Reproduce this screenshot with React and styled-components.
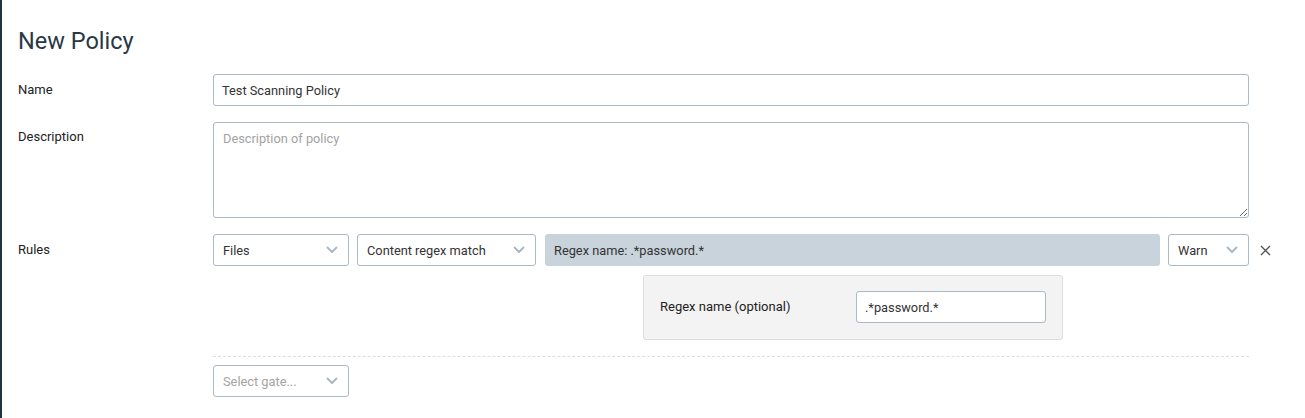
import styled, { createGlobalStyle } from 'styled-components';

const GlobalStyle = createGlobalStyle`
    html, body {
        margin: 0;
        padding: 0;
        background: #fff;
    }
    body {
        font-family: Roboto, "Noto Sans", "Liberation Sans", sans-serif;
        color: #333;
    }
    * {
        box-sizing: border-box;
    }
`;

const Pagina = styled.div`
    min-height: 100vh;
    border-left: 2px solid #23323f;
    padding: 26px 0 0 16px;
`;

const Titulo = styled.h1`
    margin: 0 0 18px;
    font-size: 23.5px;
    font-weight: 400;
    color: #2a3846;
    line-height: 30px;
`;

const Formulario = styled.div`
    display: grid;
    grid-template-columns: 195px 1036px 40px;
    row-gap: 16px;
`;

const Rotulo = styled.label`
    font-size: 13px;
    font-weight: 400;
    color: #222;
    padding-top: ${props => props.$topo || 8}px;
`;

const Campo = styled.input`
    width: 100%;
    height: 32px;
    border: 1px solid #a9b9c6;
    border-radius: 3px;
    padding: 0 8px;
    font: inherit;
    font-size: 12.8px;
    color: #333;
    outline: none;
`;

const AreaTexto = styled.textarea`
    width: 100%;
    height: 96px;
    border: 1px solid #a9b9c6;
    border-radius: 3px;
    padding: 8px 9px;
    font: inherit;
    font-size: 12.8px;
    color: #333;
    display: block;
    outline: none;

    &::placeholder {
        color: #a3a3a3;
    }
`;

const Vazio = styled.div``;

const Regras = styled.div`
    display: flex;
    flex-direction: column;
`;

const LinhaRegra = styled.div`
    display: flex;
    align-items: center;
    gap: 8px;
`;

const Seletor = styled.div`
    flex: 0 0 ${props => props.$largura}px;
    height: 32px;
    border: 1px solid #a9b9c6;
    border-radius: 3px;
    padding: 0 10px 0 9px;
    display: flex;
    align-items: center;
    justify-content: space-between;
    font-size: 12.8px;
    color: ${props => (props.$vazio ? '#a3a3a3' : '#333')};
    background: #fff;
`;

const Resumo = styled.div`
    flex: 1;
    height: 32px;
    margin-left: 1px;
    background: #c9d3dc;
    border-radius: 3px;
    padding: 0 9px;
    display: flex;
    align-items: center;
    font-size: 12.8px;
    color: #333;
`;

const Remover = styled.button`
    border: none;
    background: none;
    padding: 0;
    margin-left: 11px;
    height: 32px;
    display: flex;
    align-items: center;
    cursor: pointer;
`;

const Painel = styled.div`
    margin: 9px 0 0 430px;
    width: 420px;
    height: 65px;
    background: #f3f3f3;
    border: 1px solid #dcdcdc;
    border-radius: 3px;
    padding: 15px 16px 0 16px;
    display: flex;
    justify-content: space-between;
`;

const RotuloPainel = styled.span`
    font-size: 13px;
    font-weight: 400;
    color: #222;
    padding-top: 8px;
`;

const CampoPainel = styled(Campo)`
    width: 190px;
    padding: 0 8px;
`;

const Separador = styled.hr`
    margin: 16px 0 8px;
    border: none;
    border-top: 1px dashed #dedede;
`;

const Chevron = () => (
    <svg width="12" height="8" viewBox="0 0 12 8" fill="none">
        <path d="M1.5 1.5 L6 6 L10.5 1.5" stroke="#a8b6c2" strokeWidth="1.8" strokeLinecap="round" strokeLinejoin="round" />
    </svg>
);

const Xis = () => (
    <svg width="11" height="11" viewBox="0 0 11 11">
        <path d="M1 1 L10 10 M10 1 L1 10" stroke="#555" strokeWidth="1.4" />
    </svg>
);

function App() {
    return (
        <Pagina>
            <GlobalStyle />
            <Titulo>New Policy</Titulo>
            <Formulario>
                <Rotulo>Name</Rotulo>
                <Campo defaultValue="Test Scanning Policy" />
                <Vazio />

                <Rotulo $topo={7}>Description</Rotulo>
                <AreaTexto placeholder="Description of policy" />
                <Vazio />

                <Rotulo>Rules</Rotulo>
                <Regras>
                    <LinhaRegra>
                        <Seletor $largura={136}>Files <Chevron /></Seletor>
                        <Seletor $largura={179}>Content regex match <Chevron /></Seletor>
                        <Resumo>Regex name: .*password.*</Resumo>
                        <Seletor $largura={81}>Warn <Chevron /></Seletor>
                    </LinhaRegra>
                    <Painel>
                        <RotuloPainel>Regex name (optional)</RotuloPainel>
                        <CampoPainel defaultValue=".*password.*" />
                    </Painel>
                    <Separador />
                    <LinhaRegra>
                        <Seletor $largura={136} $vazio>Select gate... <Chevron /></Seletor>
                    </LinhaRegra>
                </Regras>
                <Vazio>
                    <Remover aria-label="Remove rule"><Xis /></Remover>
                </Vazio>
            </Formulario>
        </Pagina>
    );
}

export default App;
